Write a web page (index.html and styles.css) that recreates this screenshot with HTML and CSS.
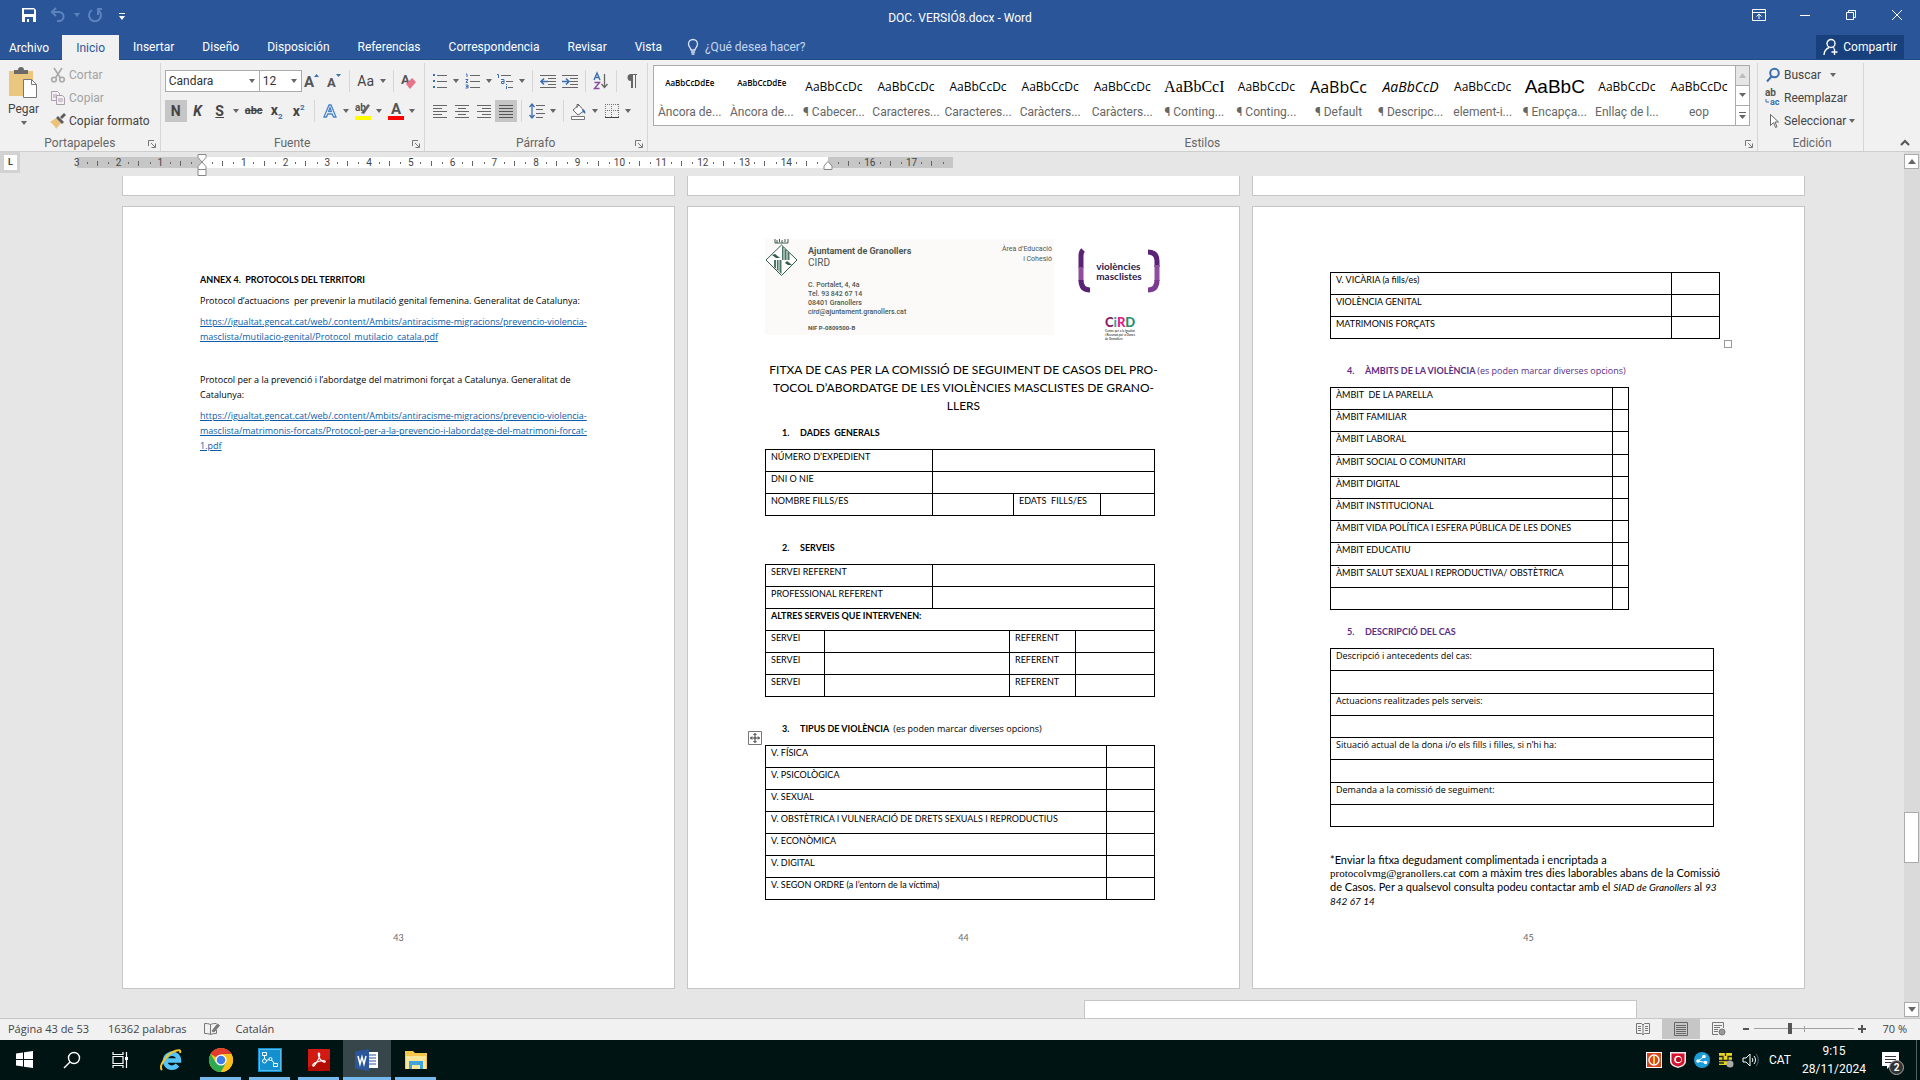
FILE: index.html
```html
<!DOCTYPE html>
<html lang="ca">
<head>
    <meta charset="UTF-8">
    <meta name="viewport" content="width=device-width, initial-scale=1.0">
    <title>DOC. VERSIÓ8.docx - Word</title>
    <link rel="stylesheet" href="styles.css">
</head>
<body>

<header class="titlebar">
    <div class="quick-access">
        <button class="qa-btn" aria-label="Guardar">
            <svg width="16" height="16" viewBox="0 0 16 16"><path d="M1 1h12l2 2v12H1z" fill="#fff"/><path d="M3 2.500h10v4.500H3zM4 10h8v5H4z" fill="#2a5699"/><path d="M6 12h2v3H6z" fill="#fff"/></svg>
        </button>
        <button class="qa-btn qa-off" aria-label="Deshacer">
            <svg width="16" height="16" viewBox="0 0 16 16" fill="none" stroke="#5d83bd" stroke-width="2"><path d="M6 1L2 5l4 4M2 5h7a4.500 4.500 0 0 1 0 9H7"/></svg>
        </button>
        <button class="caret caret-dim" aria-label="Opciones de deshacer"></button>
        <button class="qa-btn" aria-label="Rehacer">
            <svg width="16" height="16" viewBox="0 0 16 16" fill="none" stroke="#5d83bd" stroke-width="2"><path d="M5 3a6 6 0 1 0 6 0M11 8V2h4"/></svg>
        </button>
        <button class="qa-btn qa-more" aria-label="Personalizar">
            <svg width="8" height="8" viewBox="0 0 8 8"><path d="M1 0h6v1H1zM1 3h6L4 7z" fill="#fff"/></svg>
        </button>
    </div>
    <h1 class="doc-title">DOC. VERSIÓ8.docx - Word</h1>
    <div class="window-controls">
        <button class="win-btn" aria-label="Opciones de presentación"><svg width="14" height="14" viewBox="0 0 14 14" fill="none" stroke="#fff"><path d="M.5 1.500h13v11H.5zM.5 4.500h13M7 11V6.500M4.500 8.500L7 6l2.500 2.500"/></svg></button>
        <button class="win-btn" aria-label="Minimizar"><svg width="12" height="12" viewBox="0 0 12 12" stroke="#fff"><path d="M1 6.500h10"/></svg></button>
        <button class="win-btn" aria-label="Restaurar"><svg width="12" height="12" viewBox="0 0 12 12" fill="none" stroke="#fff"><path d="M1.500 3.500h7v7h-7zM3.500 3V1.500h7v7H9"/></svg></button>
        <button class="win-btn" aria-label="Cerrar"><svg width="12" height="12" viewBox="0 0 12 12" stroke="#fff"><path d="M1 1l10 10M11 1L1 11"/></svg></button>
    </div>
</header>

<nav class="tabs">
    <button class="tab tab-file">Archivo</button>
    <button class="tab tab-active">Inicio</button>
    <button class="tab">Insertar</button>
    <button class="tab">Diseño</button>
    <button class="tab">Disposición</button>
    <button class="tab">Referencias</button>
    <button class="tab">Correspondencia</button>
    <button class="tab">Revisar</button>
    <button class="tab">Vista</button>
    <button class="tell-me">
        <svg width="12" height="16" viewBox="0 0 12 16" fill="none" stroke="#dbe6f5" stroke-width="1.300"><path d="M4 11C4 9 1.500 8 1.500 5a4.500 4.500 0 0 1 9 0C10.500 8 8 9 8 11zM4 13h4M4.500 15h3"/></svg>
        ¿Qué desea hacer?
    </button>
    <button class="share">
        <svg width="16" height="18" viewBox="0 0 16 18" fill="none" stroke="#fff" stroke-width="1.400"><circle cx="8" cy="5.500" r="4"/><path d="M1 17c0-4 2-6 5-7.500M10 9.500l1.500 1M11.500 11v6M8.500 14h6"/></svg>
        Compartir
    </button>
</nav>

<section class="ribbon">
    <div class="group">
        <div class="group-body clipboard">
            <button class="paste">
                <svg width="29" height="32" viewBox="0 0 29 32"><path d="M0 4h24v25H0z" fill="#eac67e"/><path d="M5 7V3h4a3 3 0 0 1 6 0h4v4z" fill="#6a6a6a"/><path d="M14.500 12.500h8l5 5v13h-13z" fill="#fff" stroke="#777"/><path d="M22.500 12.500v5h5" fill="none" stroke="#777"/></svg>
                <span>Pegar</span>
                <i class="arrow"></i>
            </button>
            <div class="stack">
                <button class="small-btn disabled"><svg width="16" height="16" viewBox="0 0 16 16" fill="none" stroke="#a9a9a9" stroke-width="1.600"><path d="M4 1l6.500 10M12 1L5.500 11"/><circle cx="4" cy="12.500" r="2.300"/><circle cx="12" cy="12.500" r="2.300"/></svg>Cortar</button>
                <button class="small-btn disabled"><svg width="16" height="16" viewBox="0 0 16 16" fill="#f4f0f4" stroke="#ab9fae"><path d="M1.500 1.500h6l2 2v7h-8zM3 5h4M3 7h4"/><path d="M6.500 5.500h6l2 2v7h-8zM8 9h5M8 11h5"/></svg>Copiar</button>
                <button class="small-btn"><svg width="16" height="16" viewBox="0 0 16 16"><path d="M0 9l6-4 5 5-5 6c-1-3-3-5-6-7z" fill="#ecc27a"/><path d="M6 5l2-2 6 6-2 2zM10 4l4-4 2 2-4 4z" fill="#5c5c5c"/></svg>Copiar formato</button>
            </div>
        </div>
        <div class="group-label">Portapapeles<svg class="launcher" width="8" height="8" viewBox="0 0 8 8" fill="none" stroke="#777"><path d="M.5 6V.5H6M3 3l4 4M7.500 3.500v4h-4"/></svg></div>
    </div>

    <div class="group">
        <div class="group-body rows">
            <div class="tool-row">
                <label class="combo combo-font"><select aria-label="Fuente"><option>Candara</option></select></label>
                <label class="combo combo-size"><select aria-label="Tamaño de fuente"><option>12</option></select></label>
                <button class="tool" aria-label="Aumentar fuente"><svg width="16" height="18" viewBox="0 0 16 18"><text x="0" y="15" class="g-letter g15">A</text><path d="M10 5l2.500-3L15 5z" fill="#3d6fb0"/></svg></button>
                <button class="tool" aria-label="Disminuir fuente"><svg width="16" height="18" viewBox="0 0 16 18"><text x="1" y="15" class="g-letter g13">A</text><path d="M10 2h5l-2.500 3z" fill="#3d6fb0"/></svg></button>
                <i class="sep"></i>
                <button class="tool tool-text" aria-label="Cambiar mayúsculas">Aa</button><button class="caret" aria-label="Mayúsculas"></button>
                <i class="sep"></i>
                <button class="tool" aria-label="Borrar formato"><svg width="17" height="18" viewBox="0 0 17 18"><text x="1" y="12" class="g-letter g13">A</text><path d="M6 12l6-6 4 4-6 7z" fill="#e8738a"/></svg></button>
            </div>
            <div class="tool-row">
                <button class="tool on"><b>N</b></button>
                <button class="tool"><b><em>K</em></b></button>
                <button class="tool"><b><u>S</u></b></button><button class="caret" aria-label="Subrayado"></button>
                <button class="tool strike"><b><s>abc</s></b></button>
                <button class="tool"><b>x<sub>2</sub></b></button>
                <button class="tool"><b>x<sup>2</sup></b></button>
                <i class="sep"></i>
                <button class="tool" aria-label="Efectos de texto"><svg width="16" height="18" viewBox="0 0 16 18"><path d="M2 15L7 3h2l5 12h-2.500l-1.200-3H5.700l-1.200 3zM6.500 9.500h3L8 5.500z" fill="#fff" stroke="#4a83c5" stroke-width="1.300"/></svg></button><button class="caret" aria-label="Efectos"></button>
                <button class="tool" aria-label="Resaltado"><svg width="18" height="18" viewBox="0 0 18 18"><text x="1" y="9" class="g-letter g10">ab</text><path d="M7 11L14 2l2 1.500L10 12z" fill="#666"/><path d="M1 14h16v4H1z" fill="#ff0"/></svg></button><button class="caret" aria-label="Color de resaltado"></button>
                <button class="tool" aria-label="Color de fuente"><svg width="18" height="18" viewBox="0 0 18 18"><text x="4" y="12" class="g-letter g15">A</text><path d="M1 14h16v4H1z" fill="red"/></svg></button><button class="caret" aria-label="Color"></button>
            </div>
        </div>
        <div class="group-label">Fuente<svg class="launcher" width="8" height="8" viewBox="0 0 8 8" fill="none" stroke="#777"><path d="M.5 6V.5H6M3 3l4 4M7.500 3.500v4h-4"/></svg></div>
    </div>

    <div class="group">
        <div class="group-body rows">
            <div class="tool-row">
                <button class="tool" aria-label="Viñetas"><svg width="16" height="16" viewBox="0 0 16 16"><path d="M1 1h2v2H1zM1 7h2v2H1zM1 13h2v2H1z" fill="#3d6fb0"/><path d="M5 2.500h10M5 8.500h10M5 14.500h10" stroke="#666"/></svg></button><button class="caret" aria-label="Viñetas"></button>
                <button class="tool" aria-label="Numeración"><svg width="16" height="16" viewBox="0 0 16 16"><path d="M1 1h1v3M.5 6.500H3L1 9.500h2M.5 12H3v3H.5M1 13.500h2" fill="none" stroke="#3d6fb0"/><path d="M5 2.500h10M5 8.500h10M5 14.500h10" stroke="#666"/></svg></button><button class="caret" aria-label="Numeración"></button>
                <button class="tool" aria-label="Lista multinivel"><svg width="17" height="16" viewBox="0 0 17 16"><path d="M0 1.500h1.500V5M4 6.500h3v4H4.500v-2H7M9.500 11v1M9.500 13v3" fill="none" stroke="#3d6fb0"/><path d="M4 2.500h10M9 8.500h7M11 14.500h5" stroke="#666"/></svg></button><button class="caret" aria-label="Multinivel"></button>
                <i class="sep"></i>
                <button class="tool" aria-label="Disminuir sangría"><svg width="16" height="16" viewBox="0 0 16 16"><path d="M0 2.500h16M8 5.500h8M8 8.500h8M8 11.500h8M0 14.500h16" stroke="#666"/><path d="M8 8.500H1M4 5.500l-3 3 3 3" fill="none" stroke="#3d6fb0" stroke-width="1.600"/></svg></button>
                <button class="tool" aria-label="Aumentar sangría"><svg width="16" height="16" viewBox="0 0 16 16"><path d="M0 2.500h16M8 5.500h8M8 8.500h8M8 11.500h8M0 14.500h16" stroke="#666"/><path d="M0 8.500h7M4 5.500l3 3-3 3" fill="none" stroke="#3d6fb0" stroke-width="1.600"/></svg></button>
                <i class="sep"></i>
                <button class="tool" aria-label="Ordenar"><svg width="16" height="18" viewBox="0 0 16 18" fill="none"><path d="M1 8l3-7 3 7M2 5.500h4" stroke="#3d6fb0" stroke-width="1.400"/><path d="M1.500 10.500h5l-5 6h5" stroke="#8a4aa0" stroke-width="1.400"/><path d="M11.500 2v13M8.500 12l3 3.500 3-3.500" stroke="#666" stroke-width="1.300"/></svg></button>
                <i class="sep"></i>
                <button class="tool" aria-label="Mostrar todo"><svg width="12" height="16" viewBox="0 0 12 16"><path d="M5 8a3.500 3.500 0 0 1 0-7h6v1h-1v13H9V2H7v13H5z" fill="#666"/></svg></button>
            </div>
            <div class="tool-row">
                <button class="tool" aria-label="Izquierda"><svg width="16" height="16" viewBox="0 0 16 16" stroke="#666"><path d="M1 2.500h14M1 5.500h9M1 8.500h14M1 11.500h9M1 14.500h14"/></svg></button>
                <button class="tool" aria-label="Centrar"><svg width="16" height="16" viewBox="0 0 16 16" stroke="#666"><path d="M1 2.500h14M4 5.500h8M1 8.500h14M4 11.500h8M1 14.500h14"/></svg></button>
                <button class="tool" aria-label="Derecha"><svg width="16" height="16" viewBox="0 0 16 16" stroke="#666"><path d="M1 2.500h14M6 5.500h9M1 8.500h14M6 11.500h9M1 14.500h14"/></svg></button>
                <button class="tool on" aria-label="Justificar"><svg width="16" height="16" viewBox="0 0 16 16" stroke="#555"><path d="M1 2.500h14M1 5.500h14M1 8.500h14M1 11.500h14M1 14.500h14"/></svg></button>
                <i class="sep"></i>
                <button class="tool" aria-label="Interlineado"><svg width="16" height="16" viewBox="0 0 16 16" fill="none"><path d="M7 2.500h9M7 6.500h7M7 10.500h9M7 14.500h7" stroke="#666"/><path d="M3 1v14M.5 4L3 1l2.500 3M.5 12L3 15l2.500-3" stroke="#3d6fb0" stroke-width="1.300"/></svg></button><button class="caret" aria-label="Interlineado"></button>
                <i class="sep"></i>
                <button class="tool" aria-label="Sombreado"><svg width="17" height="17" viewBox="0 0 17 17"><path d="M3 7l6-5 5 6-6 4zM7 5V1.500h2" fill="#fff" stroke="#666"/><path d="M13 6c2 1 3 3 2 5l-3-3z" fill="#3d6fb0"/><path d="M1.500 13.500h13v3h-13z" fill="#fff" stroke="#777"/></svg></button><button class="caret" aria-label="Sombreado"></button>
                <button class="tool" aria-label="Bordes"><svg width="16" height="16" viewBox="0 0 16 16" stroke="#777"><path d="M1.500 1v13M7.500 1v13M14.500 1v13M1 1.500h14M1 7.500h14" stroke-dasharray="1 1"/><path d="M1 14.500h14" stroke="#444"/></svg></button><button class="caret" aria-label="Bordes"></button>
            </div>
        </div>
        <div class="group-label">Párrafo<svg class="launcher" width="8" height="8" viewBox="0 0 8 8" fill="none" stroke="#777"><path d="M.5 6V.5H6M3 3l4 4M7.500 3.500v4h-4"/></svg></div>
    </div>

    <div class="group group-styles">
        <div class="gallery">
            <div class="gallery-items">
                <button class="style"><span class="sample sample-tiny">AaBbCcDdEe</span><span>Àncora de...</span></button>
                <button class="style"><span class="sample sample-tiny">AaBbCcDdEe</span><span>Àncora de...</span></button>
                <button class="style"><span class="sample">AaBbCcDc</span><span>¶ Cabecer...</span></button>
                <button class="style"><span class="sample">AaBbCcDc</span><span>Caracteres...</span></button>
                <button class="style"><span class="sample">AaBbCcDc</span><span>Caracteres...</span></button>
                <button class="style"><span class="sample">AaBbCcDc</span><span>Caràcters...</span></button>
                <button class="style"><span class="sample">AaBbCcDc</span><span>Caràcters...</span></button>
                <button class="style"><span class="sample sample-serif">AaBbCcI</span><span>¶ Conting...</span></button>
                <button class="style"><span class="sample">AaBbCcDc</span><span>¶ Conting...</span></button>
                <button class="style"><span class="sample sample-mid">AaBbCc</span><span>¶ Default</span></button>
                <button class="style"><span class="sample sample-italic">AaBbCcD</span><span>¶ Descripc...</span></button>
                <button class="style"><span class="sample">AaBbCcDc</span><span>element-i...</span></button>
                <button class="style"><span class="sample sample-big">AaBbC</span><span>¶ Encapça...</span></button>
                <button class="style"><span class="sample">AaBbCcDc</span><span>Enllaç de l...</span></button>
                <button class="style"><span class="sample">AaBbCcDc</span><span>eop</span></button>
            </div>
            <div class="gallery-scroll">
                <button class="off" aria-label="Subir"><svg width="7" height="5" viewBox="0 0 7 5"><path d="M0 5h7L3.500 0z" fill="#bbb"/></svg></button>
                <button aria-label="Bajar"><svg width="7" height="5" viewBox="0 0 7 5"><path d="M0 0h7L3.500 4z" fill="#666"/></svg></button>
                <button aria-label="Más"><svg width="7" height="7" viewBox="0 0 7 7"><path d="M0 0h7v1H0zM0 3h7L3.500 7z" fill="#666"/></svg></button>
            </div>
        </div>
        <div class="group-label">Estilos<svg class="launcher" width="8" height="8" viewBox="0 0 8 8" fill="none" stroke="#777"><path d="M.5 6V.5H6M3 3l4 4M7.500 3.500v4h-4"/></svg></div>
    </div>

    <div class="group group-edit">
        <div class="group-body stack">
            <button class="small-btn"><svg width="16" height="16" viewBox="0 0 16 16" fill="none" stroke="#3d6fb0" stroke-width="2"><circle cx="9.500" cy="6" r="4.300"/><path d="M6.500 9.500L2 14.500"/></svg>Buscar<i class="arrow"></i></button>
            <button class="small-btn"><svg width="16" height="16" viewBox="0 0 16 16"><text x="0" y="6" class="g-letter g10">ab</text><text x="5" y="15" class="g-num">ac</text><path d="M1 9v3h3" fill="none" stroke="#3d6fb0"/></svg>Reemplazar</button>
            <button class="small-btn tight"><svg width="16" height="16" viewBox="0 0 16 16" fill="#fff" stroke="#666"><path d="M5.500 1.500v11l3-3 2 5 1.500-.7-2-4.800h3.500z"/></svg>Seleccionar<i class="arrow"></i></button>
        </div>
        <div class="group-label">Edición</div>
    </div>
    <button class="collapse" aria-label="Contraer la cinta"><svg width="10" height="7" viewBox="0 0 10 7" fill="none" stroke="#555" stroke-width="2"><path d="M1 6l4-4 4 4"/></svg></button>
</section>

<main class="workspace">
    <div class="editor">
        <div class="ruler">
            <div class="tab-stop"><span>L</span></div>
            <ol class="ruler-scale">
                <li>3</li><li>2</li><li>1</li><li></li>
                <li>1</li><li>2</li><li>3</li><li>4</li><li>5</li><li>6</li><li>7</li>
                <li>8</li><li>9</li><li>10</li><li>11</li><li>12</li><li>13</li><li>14</li>
                <li></li><li>16</li><li>17</li><li></li>
            </ol>
            <svg class="indent indent-left" width="10" height="22" viewBox="0 0 10 22" fill="#fff" stroke="#888"><path d="M1 .5h8v3l-4 4.500-4-4.500zM1 15.500v-3L5 8l4 4.500v3zM1 15.500h8v6H1z"/></svg>
            <svg class="indent indent-right" width="10" height="10" viewBox="0 0 10 10" fill="#fff" stroke="#888"><path d="M1 8.500V5l4-4.500L9 5v3.500z"/></svg>
        </div>

        <div class="canvas">
            <div class="sheet-row row-above">
                <div class="sheet"></div><div class="sheet"></div><div class="sheet"></div>
            </div>

            <div class="sheet-row">
                <article class="sheet page">
                    <h2 class="annex-title">ANNEX 4.&nbsp; PROTOCOLS DEL TERRITORI</h2>
                    <p class="annex-text">Protocol d’actuacions&nbsp; per prevenir la mutilació genital femenina. Generalitat de Catalunya:</p>
                    <p class="annex-text"><a href="#">https://igualtat.gencat.cat/web/.content/Ambits/antiracisme-migracions/prevencio-violencia-<br>masclista/mutilacio-genital/Protocol_mutilacio_catala.pdf</a></p>
                    <p class="annex-text annex-second">Protocol per a la prevenció i l’abordatge del matrimoni forçat a Catalunya. Generalitat de<br>Catalunya:</p>
                    <p class="annex-text"><a href="#">https://igualtat.gencat.cat/web/.content/Ambits/antiracisme-migracions/prevencio-violencia-<br>masclista/matrimonis-forcats/Protocol-per-a-la-prevencio-i-labordatge-del-matrimoni-forcat-<br>1.pdf</a></p>
                    <footer class="page-number">43</footer>
                </article>

                <article class="sheet page page-form">
                    <header class="letterhead">
                        <div class="council">
                            <svg width="33" height="38" viewBox="0 0 33 38">
                                <path d="M10 0v4h13V0M12 1v3M14.500 0v3M17 1v3M20 0v3" fill="none" stroke="#3d5f50"/>
                                <path d="M16.500 6L32 21 16.500 36.500 1 21z" fill="#fff" stroke="#2f5c4a"/>
                                <path d="M17 7l7.500 7v7H17zM9 21h7.500v14L9 28z" fill="#4c7765"/>
                                <path d="M19 9v12M22 12v9M11.500 21v9M14 21v12" stroke="#e9f0ec"/>
                                <path d="M7 16l3-1 5 4-4 0zM20 24l2-2 5 4-4 0z" fill="#2f5c4a"/>
                            </svg>
                            <address class="council-info">
                                <strong>Ajuntament de Granollers</strong>
                                <span class="council-unit">CIRD</span>
                                <p>C. Portalet, 4, 4a<br>Tel. 93 842 67 14<br>08401 Granollers<br><em>cird</em>@ajuntament.granollers.cat</p>
                                <small>NIF P-0809500-B</small>
                            </address>
                            <p class="council-area">Àrea d’Educació<br>i Cohesió</p>
                        </div>
                        <div class="logos">
                            <div class="vm-logo">
                                <svg width="13" height="44" viewBox="0 0 13 44" fill="none" stroke-width="5"><path d="M5 1Q3 3 3 7v12" stroke="#5a2378"/><path d="M3 18v14" stroke="#8f4d9c"/><path d="M3 31c0 7 3 10 9 10" stroke="#5a2378"/></svg>
                                <span>violències<br>masclistes</span>
                                <svg width="13" height="44" viewBox="0 0 13 44" fill="none" stroke-width="5"><path d="M1 3c6 0 9 3 9 9v6" stroke="#5a2378"/><path d="M10 16v16" stroke="#8f4d9c"/><path d="M10 31c0 7-3 10-9 10" stroke="#7b3b90"/></svg>
                            </div>
                            <div class="cird-logo">
                                <b><i>C</i><i>i</i><i>R</i><i>D</i></b>
                                <small>Centre per a la Igualtat<br>i Recursos per a Dones<br>de Granollers</small>
                            </div>
                        </div>
                    </header>

                    <h2 class="form-title">FITXA DE CAS PER LA COMISSIÓ DE SEGUIMENT DE CASOS DEL PRO-<br>TOCOL D’ABORDATGE DE LES VIOLÈNCIES MASCLISTES DE GRANO-<br>LLERS</h2>

                    <h3 class="section-title section-first"><span>1.</span>DADES&nbsp; GENERALS</h3>
                    <table class="form-table table-data">
                        <colgroup><col><col><col><col></colgroup>
                        <tr><td>NÚMERO D’EXPEDIENT</td><td colspan="3"></td></tr>
                        <tr><td>DNI O NIE</td><td colspan="3"></td></tr>
                        <tr><td>NOMBRE FILLS/ES</td><td></td><td>EDATS&nbsp; FILLS/ES</td><td></td></tr>
                    </table>

                    <h3 class="section-title"><span>2.</span>SERVEIS</h3>
                    <table class="form-table table-services">
                        <colgroup><col><col><col><col><col></colgroup>
                        <tr><td colspan="2">SERVEI REFERENT</td><td colspan="3"></td></tr>
                        <tr><td colspan="2">PROFESSIONAL REFERENT</td><td colspan="3"></td></tr>
                        <tr><th colspan="5">ALTRES SERVEIS QUE INTERVENEN:</th></tr>
                        <tr><td>SERVEI</td><td colspan="2"></td><td>REFERENT</td><td></td></tr>
                        <tr><td>SERVEI</td><td colspan="2"></td><td>REFERENT</td><td></td></tr>
                        <tr><td>SERVEI</td><td colspan="2"></td><td>REFERENT</td><td></td></tr>
                    </table>

                    <h3 class="section-title"><span>3.</span>TIPUS DE VIOLÈNCIA&nbsp; <small>(es poden marcar diverses opcions)</small></h3>
                    <div class="table-wrap">
                        <svg class="move-handle" width="14" height="14" viewBox="0 0 14 14" fill="#fff" stroke="#777"><path d="M.5.5h13v13H.5z"/><path d="M7 2.500v9M2.500 7h9M5.500 4L7 2.500 8.500 4M5.500 10L7 11.500 8.500 10M4 5.500L2.500 7 4 8.500M10 5.500L11.500 7 10 8.500" stroke="#333" fill="none"/></svg>
                        <table class="form-table table-types">
                            <colgroup><col><col></colgroup>
                            <tr><td>V. FÍSICA</td><td></td></tr>
                            <tr><td>V. PSICOLÒGICA</td><td></td></tr>
                            <tr><td>V. SEXUAL</td><td></td></tr>
                            <tr><td>V. OBSTÈTRICA I VULNERACIÓ DE DRETS SEXUALS I REPRODUCTIUS</td><td></td></tr>
                            <tr><td>V. ECONÒMICA</td><td></td></tr>
                            <tr><td>V. DIGITAL</td><td></td></tr>
                            <tr><td>V. SEGON ORDRE (a l’entorn de la víctima)</td><td></td></tr>
                        </table>
                    </div>
                    <footer class="page-number">44</footer>
                </article>

                <article class="sheet page">
                    <div class="table-wrap">
                        <table class="form-table table-types">
                            <colgroup><col><col></colgroup>
                            <tr><td>V. VICÀRIA (a fills/es)</td><td></td></tr>
                            <tr><td>VIOLÈNCIA GENITAL</td><td></td></tr>
                            <tr><td>MATRIMONIS FORÇATS</td><td></td></tr>
                        </table>
                        <i class="resize-handle"></i>
                    </div>

                    <h3 class="section-title purple"><span>4.</span>ÀMBITS DE LA VIOLÈNCIA <small>(es poden marcar diverses opcions)</small></h3>
                    <table class="form-table table-scope">
                        <colgroup><col><col></colgroup>
                        <tr><td>ÀMBIT&nbsp; DE LA PARELLA</td><td></td></tr>
                        <tr><td>ÀMBIT FAMILIAR</td><td></td></tr>
                        <tr><td>ÀMBIT LABORAL</td><td></td></tr>
                        <tr><td>ÀMBIT SOCIAL O COMUNITARI</td><td></td></tr>
                        <tr><td>ÀMBIT DIGITAL</td><td></td></tr>
                        <tr><td>ÀMBIT INSTITUCIONAL</td><td></td></tr>
                        <tr><td>ÀMBIT VIDA POLÍTICA I ESFERA PÚBLICA DE LES DONES</td><td></td></tr>
                        <tr><td>ÀMBIT EDUCATIU</td><td></td></tr>
                        <tr><td>ÀMBIT SALUT SEXUAL I REPRODUCTIVA/ OBSTÈTRICA</td><td></td></tr>
                        <tr><td></td><td></td></tr>
                    </table>

                    <h3 class="section-title section-close purple"><span>5.</span>DESCRIPCIÓ DEL CAS</h3>
                    <table class="form-table table-case">
                        <tr><td>Descripció i antecedents del cas:</td></tr>
                        <tr><td></td></tr>
                        <tr><td>Actuacions realitzades pels serveis:</td></tr>
                        <tr><td></td></tr>
                        <tr><td>Situació actual de la dona i/o els fills i filles, si n’hi ha:</td></tr>
                        <tr><td></td></tr>
                        <tr><td>Demanda a la comissió de seguiment:</td></tr>
                        <tr><td></td></tr>
                    </table>

                    <p class="send-note">*Enviar la fitxa degudament complimentada i encriptada a<br><span class="mail">protocolvmg@granollers.cat</span> com a màxim tres dies laborables abans de la Comissió<br>de Casos. Per a qualsevol consulta podeu contactar amb el <em>SIAD de Granollers</em> al <em>93<br>842 67 14</em></p>
                    <footer class="page-number">45</footer>
                </article>
            </div>

            <div class="sheet-row row-below">
                <div class="sheet"></div>
            </div>
        </div>
    </div>

    <div class="scrollbar">
        <button aria-label="Arriba"><svg width="8" height="5" viewBox="0 0 8 5"><path d="M0 5h8L4 0z" fill="#666"/></svg></button>
        <div class="scroll-before"></div>
        <div class="scroll-thumb"></div>
        <div class="scroll-after"></div>
        <button aria-label="Abajo"><svg width="8" height="5" viewBox="0 0 8 5"><path d="M0 0h8L4 5z" fill="#666"/></svg></button>
    </div>
</main>

<footer class="statusbar">
    <span class="st-page">Página 43 de 53</span>
    <span class="st-words">16362 palabras</span>
    <svg class="st-proof" width="16" height="14" viewBox="0 0 16 14" fill="none" stroke="#777"><path d="M6.500 12.500v-10c-2-1-4-1-6-1v10c2 0 4 0 6 1 2-1 4-1 6-1V8M6.500 2.500c2-1 4-1 6-1"/><path d="M8 9l5.500-7 2 1.500-5.500 6.500z" fill="#777"/></svg>
    <span>Catalán</span>
    <div class="views">
        <button aria-label="Modo de lectura"><svg width="14" height="14" viewBox="0 0 14 14" fill="none" stroke="#777"><path d="M7 2.500v10M.5 1.500h5L7 3l1.500-1.500h5v10h-5L7 13l-1.500-1.500h-5zM2 4.500h3M2 6.500h3M2 8.500h3M9 4.500h3M9 6.500h3M9 8.500h3"/></svg></button>
        <button class="on" aria-label="Diseño de impresión"><svg width="14" height="14" viewBox="0 0 14 14" fill="none" stroke="#666"><path d="M.5.500h13v13H.5zM2 3.500h10M2 5.500h10M2 7.500h10M2 9.500h10M2 11.500h10"/></svg></button>
        <button aria-label="Diseño web"><svg width="14" height="14" viewBox="0 0 14 14" fill="none" stroke="#777"><path d="M6 12.500H.5v-12h11V6M2 3.500h8M2 5.500h6M2 7.500h4M2 9.500h4"/><circle cx="10" cy="10" r="3" fill="#999"/></svg></button>
        <button class="zoom-step" aria-label="Alejar"><svg width="8" height="8" viewBox="0 0 8 8"><path d="M1 3h6v2H1z" fill="#555"/></svg></button>
        <input class="zoom" type="range" min="10" max="180" value="70" aria-label="Zoom">
        <button class="zoom-step" aria-label="Acercar"><svg width="8" height="8" viewBox="0 0 8 8"><path d="M0 3h3V0h2v3h3v2H5v3H3V5H0z" fill="#555"/></svg></button>
        <span class="zoom-value">70 %</span>
    </div>
</footer>

<div class="taskbar">
    <button class="task" aria-label="Inicio"><svg width="17" height="17" viewBox="0 0 17 17" fill="#fff"><path d="M0 2.500L7 1.500V8H0zM8 1.300L17 0v8H8zM0 9h7v6.500l-7-1zM8 9h9v8l-9-1.300z"/></svg></button>
    <button class="task" aria-label="Buscar"><svg width="18" height="18" viewBox="0 0 18 18" fill="none" stroke="#fff" stroke-width="1.400"><circle cx="11" cy="7" r="5.500"/><path d="M7 11l-6 6"/></svg></button>
    <button class="task" aria-label="Vista de tareas"><svg width="17" height="16" viewBox="0 0 17 16" fill="none" stroke="#fff" stroke-width="1.200"><path d="M1 4.500h10v7H1zM1 0v2.500h10V0M1 16v-2.500h10V16M14.500 0v16"/><path d="M13 5h3v3h-3z" fill="#fff" stroke="none"/></svg></button>
    <button class="task task-wide" aria-label="Internet Explorer"><svg width="24" height="24" viewBox="0 0 24 24" fill="none"><path d="M18.500 17a7 7 0 1 1 1.500-4.500H7" stroke="#55c3f5" stroke-width="4.500"/><path d="M3 22C-1 18 8 6 16 3c4-1.500 6-1 5 2" stroke="#f3c52c" stroke-width="2"/></svg></button>
    <button class="task task-open" aria-label="Chrome"><svg width="24" height="24" viewBox="0 0 24 24"><circle cx="12" cy="12" r="12" fill="#fbbf1c"/><path d="M12 12L1.600 6A12 12 0 0 1 22.400 6z" fill="#e33b2e"/><path d="M1.600 6A12 12 0 0 0 12 24l5-9-5-3-5 3z" fill="#2da94f"/><path d="M12 6h10.400A12 12 0 0 1 12 24l5-9z" fill="#fbbf1c"/><circle cx="12" cy="12" r="5.600" fill="#fff"/><circle cx="12" cy="12" r="4.300" fill="#3f7de8"/></svg></button>
    <button class="task task-open" aria-label="Compartir red"><svg width="24" height="24" viewBox="0 0 24 24"><path d="M0 0h24v24H0z" fill="#1390cf"/><path d="M1.500 1.500h21v21h-21z" fill="none" stroke="#5db9e6"/><g fill="none" stroke="#fff"><circle cx="6.500" cy="13" r="2"/><circle cx="12.500" cy="11" r="1.500"/><path d="M4.500 4.500h4v3h-4zM15.500 15.500h4v3h-4zM8.500 12.500l2.500-1M6.500 11V8M13.500 12l3 3.500"/></g></svg></button>
    <button class="task task-open" aria-label="Acrobat"><svg width="22" height="22" viewBox="0 0 22 22"><path d="M0 0h22v22H0z" fill="#b30b00"/><path d="M0 0h22v10L0 18z" fill="#d01a12"/><path d="M5 17c-1-2 3-4 7-5s6 0 5 1-5-2-6-5-1-4 0-4 1 4-1 7-4 7-5 6z" fill="none" stroke="#fff" stroke-width="1.200"/></svg></button>
    <button class="task task-open task-active" aria-label="Word"><svg width="24" height="22" viewBox="0 0 24 22"><path d="M12 3h11v16H12z" fill="#fff"/><path d="M14 6h7M14 9h7M14 12h7M14 15h7" stroke="#2b579a"/><path d="M0 2.500L14 0v22L0 19.500z" fill="#2b579a"/><path d="M3 7l2 8 2-7 2 7 2-8" fill="none" stroke="#fff" stroke-width="1.500"/></svg></button>
    <button class="task task-open" aria-label="Explorador"><svg width="22" height="20" viewBox="0 0 22 20"><path d="M0 1h8l2 2h12v16H0z" fill="#f5c84c"/><path d="M1 6h20v13H1z" fill="#fde69a"/><path d="M4 19v-8h14v8h-3v-4H7v4z" fill="#3fa3dc"/></svg></button>

    <div class="tray">
        <svg width="16" height="16" viewBox="0 0 16 16"><path d="M0 0h16v16H0z" fill="#fff"/><path d="M1 1h14v14H1z" fill="#d5471f"/><circle cx="8" cy="8" r="5" fill="none" stroke="#fff" stroke-width="1.400"/><path d="M7 4h2v8H7z" fill="#ffd24a"/></svg>
        <svg width="16" height="16" viewBox="0 0 16 16"><path d="M0 0h16v9c0 4-4 6-8 7-4-1-8-3-8-7z" fill="#eee"/><path d="M1.500 1.500h13V9c0 3-3 5-6.500 5.500C4.500 14 1.500 12 1.500 9z" fill="#d8122c"/><circle cx="8" cy="7.500" r="3.800" fill="#fff"/><circle cx="8.500" cy="7.500" r="2.600" fill="#b50d20"/></svg>
        <svg width="16" height="16" viewBox="0 0 16 16"><circle cx="8" cy="8" r="8" fill="#1d9bd7"/><g fill="#fff"><circle cx="4" cy="9" r="1.800"/><circle cx="10" cy="4.500" r="1.800"/><circle cx="11.500" cy="10.500" r="1.800"/></g><path d="M4 9l6-4.500M4 9l7.500 1.500" stroke="#fff"/></svg>
        <svg width="16" height="16" viewBox="0 0 16 16"><path d="M1 1h13v12H1z" fill="#e8d51f"/><path d="M1 4.500h4v4H1M14 4.500h-4v4h4M7.500 1v3M5 8.500h5M1 11h5" fill="none" stroke="#222" stroke-width="1.300"/><circle cx="12" cy="12" r="3.500" fill="#aaa"/></svg>
        <svg width="17" height="16" viewBox="0 0 17 16" fill="none" stroke="#fff"><path d="M1 6h3l4-4v12l-4-4H1zM10 6c1 1 1 3 0 4M12 4c2 2 2 6 0 8"/><path d="M14 2c3 3 3 9 0 12" stroke="#667"/></svg>
        <span class="lang">CAT</span>
        <time class="clock">9:15<br>28/11/2024</time>
        <div class="notify">
            <svg width="17" height="17" viewBox="0 0 17 17"><path d="M0 0h17v14H8l-3 3v-3H0z" fill="#fff"/><path d="M3 4.500h11M3 7.500h11M3 10.500h7" stroke="#333"/></svg>
            <span>2</span>
        </div>
    </div>
</div>

</body>
</html>
```
FILE: styles.css
```css
* {
    box-sizing: border-box;
}
body {
    margin: 0;
    height: 100vh;
    display: flex;
    flex-direction: column;
    overflow: hidden;
    font-family: Roboto, "Open Sans", sans-serif;
    font-size: 12px;
    line-height: 16px;
    color: #444;
    background: #e6e6e6;
}
button {
    margin: 0;
    padding: 0;
    border: 0;
    background: none;
    color: inherit;
    font: inherit;
    white-space: nowrap;
}
h1, h2, h3, p, ol {
    margin: 0;
    padding: 0;
    font-weight: normal;
}
svg {
    flex: none;
    display: block;
    overflow: visible;
}

/* Title bar */
.titlebar {
    display: grid;
    grid-template-columns: 1fr auto 1fr;
    align-items: center;
    height: 35px;
    flex: none;
    background: #2a5699;
    color: #fff;
}
.quick-access {
    display: flex;
    align-items: center;
    gap: 3px;
    padding: 0 0 6px 19px;
}
.qa-btn {
    display: flex;
    justify-content: center;
    width: 20px;
}
.qa-off {
    margin-left: 6px;
}
.qa-more {
    margin: 4px 0 0 4px;
}
.doc-title {
    font-size: 12px;
}
.window-controls {
    display: flex;
    justify-content: flex-end;
    padding-bottom: 6px;
}
.win-btn {
    width: 46px;
    height: 28px;
    display: flex;
    align-items: center;
    justify-content: center;
}

/* Ribbon tabs */
.tabs {
    display: flex;
    height: 25px;
    flex: none;
    background: #2a5699;
    color: #fff;
    border-bottom: 1px solid #234a86;
}
.tab {
    padding: 0 14px;
}
.tab-file {
    padding: 2px 13px 0 9px;
}
.tab-active {
    background: #f1f1f1;
    color: #2a5699;
    margin-bottom: -1px;
}
.tell-me {
    display: flex;
    align-items: center;
    gap: 6px;
    margin-left: 11px;
    color: #c5d6ee;
}
.share {
    display: flex;
    align-items: center;
    gap: 4px;
    margin-left: auto;
    margin-right: 16px;
    padding: 0 7px;
    background: #17407c;
}

/* Ribbon */
.ribbon {
    display: flex;
    height: 92px;
    flex: none;
    padding-top: 3px;
    background: #f1f1f1;
    border-bottom: 1px solid #cdcdcd;
}
.group {
    display: flex;
    flex-direction: column;
    justify-content: space-between;
    padding: 0 4px;
    border-right: 1px solid #d6d6d6;
}
.group-label {
    position: relative;
    text-align: center;
    color: #666;
}
.launcher {
    position: absolute;
    right: 0;
    bottom: 3px;
}
.clipboard {
    display: flex;
    gap: 7px;
    padding-right: 6px;
}
.paste {
    display: flex;
    flex-direction: column;
    align-items: center;
    width: 39px;
    padding-top: 4px;
}
.paste span {
    margin: 2px 0 4px;
}
.arrow, .caret::before {
    display: block;
    border: 3px solid transparent;
    border-top: 4px solid #666;
    border-bottom: 0;
    width: 0;
    height: 0;
    content: "";
}
.caret {
    width: 11px;
    display: flex;
    justify-content: center;
    align-items: center;
}
.caret-dim::before {
    border-top-color: #5d83bd;
}
.stack {
    display: flex;
    flex-direction: column;
}
.small-btn {
    display: flex;
    align-items: center;
    gap: 3px;
    height: 23px;
}
.small-btn .arrow {
    margin-left: 6px;
}
.tight .arrow {
    margin-left: 0;
}
.disabled {
    color: #a3a3a3;
}
.rows {
    display: flex;
    flex-direction: column;
    gap: 8px;
    padding-top: 7px;
}
.tool-row {
    display: flex;
    height: 22px;
}
.tool {
    width: 22px;
    display: flex;
    align-items: center;
    justify-content: center;
    font-size: 14px;
}
.tool sub, .tool sup {
    font-size: 8px;
    line-height: 8px;
    color: #3d6fb0;
}
.strike {
    font-size: 11px;
    width: 24px;
}
.tool-text {
    width: 24px;
}
.on {
    background: #c6c6c6;
}
.sep {
    width: 1px;
    margin: 0 4px;
    background: #d6d6d6;
}
.combo {
    position: relative;
    margin-right: -1px;
}
.combo::after {
    content: "";
    position: absolute;
    right: 5px;
    top: 9px;
    border: 3px solid transparent;
    border-top: 4px solid #666;
    border-bottom: 0;
}
.combo select {
    appearance: none;
    width: 100%;
    height: 22px;
    padding: 0 3px;
    border: 1px solid #ababab;
    border-radius: 0;
    background: #fff;
    color: #333;
    font: inherit;
}
.combo-font {
    width: 95px;
}
.combo-size {
    width: 43px;
}
.g-letter {
    font-weight: bold;
    fill: #555;
}
.g-num {
    font-weight: bold;
    font-size: 9px;
    fill: #3d6fb0;
}
.g10 {
    font-size: 10px;
}
.g13 {
    font-size: 13px;
}
.g15 {
    font-size: 15px;
}

/* Styles gallery */
.group-styles {
    flex: 1;
    min-width: 0;
}
.gallery {
    display: flex;
    height: 61px;
    margin: 2px 3px 0 1px;
    border: 1px solid #ababab;
    background: #fff;
}
.gallery-items {
    flex: 1;
    display: grid;
    grid-template-columns: repeat(15, 1fr);
}
.style {
    display: flex;
    flex-direction: column;
    justify-content: flex-end;
    align-items: center;
    padding-bottom: 5px;
    overflow: hidden;
    color: #666;
}
.sample {
    height: 32px;
    line-height: 30px;
    font-family: "Open Sans", sans-serif;
    font-size: 12px;
    color: #000;
}
.sample-tiny {
    font-size: 8px;
    line-height: 22px;
    font-weight: 600;
}
.sample-serif {
    font-family: "Liberation Serif", serif;
    font-size: 16px;
}
.sample-mid {
    font-size: 16px;
}
.sample-italic {
    font-style: italic;
    font-size: 14px;
}
.sample-big {
    font-family: "Liberation Sans", sans-serif;
    font-size: 19px;
}
.gallery-scroll {
    display: flex;
    flex-direction: column;
    width: 14px;
    border-left: 1px solid #ababab;
}
.gallery-scroll button {
    flex: 1;
    display: flex;
    align-items: center;
    justify-content: center;
}
.gallery-scroll button + button {
    border-top: 1px solid #ababab;
}
.off {
    background: #e6e6e6;
}
.group-edit {
    width: 106px;
    padding-left: 7px;
}
.collapse {
    align-self: flex-end;
    margin: 0 10px 5px 36px;
}

/* Ruler */
.workspace {
    flex: 1;
    display: flex;
    min-height: 0;
}
.editor {
    flex: 1;
    display: flex;
    flex-direction: column;
    min-width: 0;
}
.ruler {
    position: relative;
    display: flex;
    height: 24px;
    flex: none;
}
.tab-stop {
    width: 20px;
    height: 21px;
    border: 3px solid #d2d2d2;
    border-left-width: 4px;
    background: #fff;
    font-size: 9px;
    font-weight: bold;
    line-height: 15px;
    text-align: center;
}
.ruler-scale {
    display: flex;
    list-style: none;
    width: 918px;
    height: 11px;
    margin: 5px 0 0 36px;
    font-size: 10px;
    line-height: 11px;
    background: linear-gradient(90deg, transparent 21px, #c6c6c6 21px 146px, #fff 146px 772px, #c6c6c6 772px 897px, transparent 897px);
}
.ruler-scale li {
    flex: 1;
    text-align: center;
    background:
        linear-gradient(#666, #666) 25% 5px / 1px 2px no-repeat,
        linear-gradient(#666, #666) 75% 5px / 1px 2px no-repeat,
        linear-gradient(#666, #666) 100% 4px / 1px 5px no-repeat;
}
.ruler-scale li:first-child {
    background:
        linear-gradient(#666, #666) 75% 5px / 1px 2px no-repeat,
        linear-gradient(#666, #666) 100% 4px / 1px 5px no-repeat;
}
.ruler-scale li:last-child {
    background: linear-gradient(#666, #666) 25% 5px / 1px 2px no-repeat;
}
.indent {
    position: absolute;
}
.indent-left {
    left: 197px;
    top: 2px;
}
.indent-right {
    left: 823px;
    top: 9px;
}

/* Document */
.canvas {
    flex: 1;
    display: flex;
    flex-direction: column;
    gap: 11px;
    padding-left: 23px;
    overflow: hidden;
}
.sheet-row {
    display: flex;
    justify-content: center;
    gap: 12px;
    flex: none;
}
.sheet {
    width: 553px;
    background: #fff;
    border: 1px solid #c6c6c6;
}
.row-above .sheet {
    height: 20px;
    border-top: 0;
}
.row-above {
    margin-bottom: -1px;
}
.row-below {
    padding-left: 794px;
}
.row-below .sheet {
    height: 782px;
}
.page {
    display: flex;
    flex-direction: column;
    height: 783px;
    padding: 65px 77px 43px;
    font-family: Lato, "Open Sans", sans-serif;
    font-size: 9px;
    line-height: 15px;
    color: #000;
}
.page-form {
    padding-top: 32px;
}
.page-number {
    margin-top: auto;
    text-align: center;
    color: #666;
}
.annex-title {
    font-size: 9px;
    font-weight: bold;
    white-space: nowrap;
}
.annex-text {
    margin-top: 6px;
    font-family: "Open Sans", sans-serif;
    white-space: nowrap;
}
.annex-text a {
    color: #0b5cab;
}
.annex-second {
    margin-top: 28px;
}

/* Letterhead */
.letterhead {
    display: flex;
    justify-content: space-between;
    height: 122px;
    margin-right: 2px;
}
.council {
    display: flex;
    width: 289px;
    height: 96px;
    background: #fcf9f9;
    color: #4c5a55;
    font-family: Roboto, sans-serif;
    font-size: 7px;
    line-height: 9px;
}
.council-info {
    display: flex;
    flex-direction: column;
    flex: 1;
    padding: 6px 0 0 10px;
    font-style: normal;
    font-weight: 500;
}
.council-info strong {
    font-size: 9px;
    line-height: 12px;
}
.council-unit {
    font-size: 10px;
    line-height: 12px;
    font-weight: normal;
}
.council-info p {
    margin-top: 12px;
    font-weight: 500;
}
.council-info small {
    margin-top: 6px;
    font-size: 6px;
    font-weight: bold;
}
.council-area {
    padding: 5px 2px 0 0;
    text-align: right;
    line-height: 10px;
}
.logos {
    display: flex;
    flex-direction: column;
    gap: 22px;
    padding-top: 10px;
}
.vm-logo {
    display: flex;
    justify-content: space-between;
    align-items: center;
    width: 82px;
    color: #2a1a4a;
    font-family: Lato, sans-serif;
    font-size: 10px;
    font-weight: bold;
    line-height: 10px;
}
.cird-logo {
    padding-left: 27px;
    line-height: 14px;
}
.cird-logo b {
    display: block;
    font-size: 13px;
    font-weight: 900;
}
.cird-logo i {
    font-style: normal;
    color: #8c1f6c;
}
.cird-logo i:nth-child(2) {
    color: #25a7a0;
}
.cird-logo i:nth-child(3) {
    color: #e0218a;
}
.cird-logo i:nth-child(4) {
    color: #1d8f6a;
}
.cird-logo small {
    display: block;
    font-size: 3px;
    line-height: 4px;
    white-space: nowrap;
}

/* Case form */
.form-title {
    margin: 0 -4px;
    text-align: center;
    font-size: 12px;
    line-height: 18px;
    white-space: nowrap;
}
.section-title {
    margin: 24px 0 9px;
    padding-left: 17px;
    font-size: 9px;
    font-weight: bold;
    white-space: nowrap;
}
.section-title span {
    display: inline-block;
    width: 18px;
}
.section-title small {
    font-family: "Open Sans", sans-serif;
    font-size: 9px;
    font-weight: normal;
}
.section-first {
    margin-top: 10px;
}
.section-close {
    margin-top: 14px;
}
.purple {
    color: #5b2d86;
}
.table-wrap {
    position: relative;
}
.form-table {
    table-layout: fixed;
    width: 390px;
    border-collapse: collapse;
    line-height: 13px;
}
.form-table td, .form-table th {
    height: 22px;
    padding: 0 5px;
    border: 1px solid #000;
    text-align: left;
    vertical-align: top;
    white-space: nowrap;
}
.table-data col:nth-child(1) { width: 167px; }
.table-data col:nth-child(2) { width: 81px; }
.table-data col:nth-child(3) { width: 87px; }
.table-services col:nth-child(1) { width: 59px; }
.table-services col:nth-child(2) { width: 108px; }
.table-services col:nth-child(3) { width: 77px; }
.table-services col:nth-child(4) { width: 66px; }
.table-types col:nth-child(1) { width: 341px; }
.table-scope {
    width: 299px;
    height: 223px;
}
.table-scope col:nth-child(1) { width: 282px; }
.table-case {
    width: 384px;
    height: 179px;
    font-family: "Open Sans", sans-serif;
}
.move-handle {
    position: absolute;
    left: -17px;
    top: -14px;
}
.resize-handle {
    position: absolute;
    right: -5px;
    bottom: -9px;
    width: 8px;
    height: 8px;
    border: 1px solid #999;
}
.send-note {
    margin: 26px -4px 0 0;
    font-size: 11px;
    line-height: 13px;
    white-space: nowrap;
}
.mail {
    font-family: "Liberation Serif", serif;
}
.send-note em {
    font-size: 10px;
}

/* Scroll bar */
.scrollbar {
    display: flex;
    flex-direction: column;
    width: 16px;
    padding: 2px 1px 1px 0;
    background: #dadada;
}
.scrollbar button {
    display: flex;
    align-items: center;
    justify-content: center;
    height: 15px;
    border: 1px solid #ababab;
    background: #fff;
}
.scroll-before {
    flex: 645;
}
.scroll-thumb {
    flex: 49;
    border: 1px solid #ababab;
    background: #fff;
}
.scroll-after {
    flex: 139;
}

/* Status bar */
.statusbar {
    display: flex;
    align-items: center;
    height: 22px;
    flex: none;
    padding: 0 0 2px 8px;
    font-family: "Open Sans", sans-serif;
    font-size: 11px;
    background: #f1f1f1;
    border-top: 1px solid #c6c6c6;
}
.st-words {
    margin-left: 19px;
}
.st-proof {
    margin: 0 16px 0 17px;
}
.views {
    display: flex;
    align-items: center;
    height: 21px;
    margin-left: auto;
    padding-right: 13px;
}
.views button {
    display: flex;
    align-items: center;
    justify-content: center;
    width: 38px;
    height: 21px;
}
.views .zoom-step {
    width: 16px;
}
.zoom {
    appearance: none;
    width: 100px;
    height: 14px;
    margin: 0;
    background: linear-gradient(#a0a0a0, #a0a0a0) center / 100% 1px no-repeat, linear-gradient(#a0a0a0, #a0a0a0) center / 1px 6px no-repeat;
}
.zoom::-webkit-slider-thumb {
    appearance: none;
    width: 4px;
    height: 11px;
    background: #555;
}
.zoom-value {
    margin-left: 12px;
}

/* Taskbar */
.taskbar {
    display: flex;
    height: 40px;
    flex: none;
    background: #001413;
    color: #fff;
}
.task {
    display: flex;
    align-items: center;
    justify-content: center;
    width: 48px;
    border-bottom: 3px solid transparent;
    padding-top: 2px;
}
.task-wide {
    width: 54px;
    margin-right: -2px;
}
.task-open {
    width: 41px;
    margin: 0 4px;
    border-bottom-color: #76b9ed;
}
.task-active {
    width: 48px;
    margin: 0;
    background: #36464a;
}
.tray {
    display: flex;
    align-items: center;
    gap: 8px;
    margin-left: auto;
    padding-right: 3px;
    border-right: 1px solid #55605f;
    margin-right: 3px;
}
.lang {
    margin-left: 2px;
}
.clock {
    width: 70px;
    line-height: 18px;
    text-align: center;
    font-size: 12px;
}
.notify {
    position: relative;
    width: 36px;
    padding-left: 5px;
}
.notify span {
    position: absolute;
    left: 12px;
    top: 8px;
    width: 15px;
    height: 15px;
    border: 1px solid #aaa;
    border-radius: 50%;
    background: #333;
    font-size: 10px;
    font-weight: bold;
    line-height: 13px;
    text-align: center;
}
```
